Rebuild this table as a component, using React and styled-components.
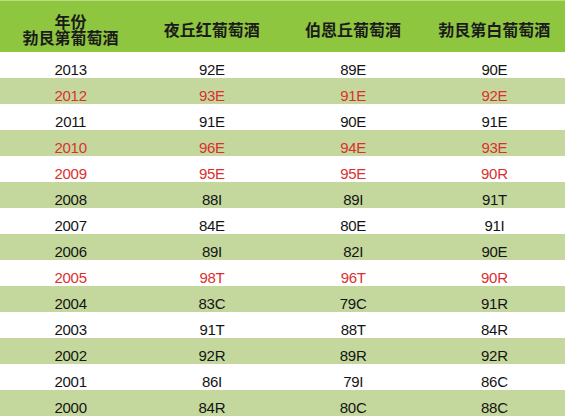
import styled, { createGlobalStyle } from "styled-components";

const GlobalStyle = createGlobalStyle`
  html, body {
    margin: 0;
    padding: 0;
    background: #ffffff;
  }
`;

const columns = ["夜丘红葡萄酒", "伯恩丘葡萄酒", "勃艮第白葡萄酒"];

const rows = [
  { year: "2013", scores: ["92E", "89E", "90E"] },
  { year: "2012", scores: ["93E", "91E", "92E"], hot: true },
  { year: "2011", scores: ["91E", "90E", "91E"] },
  { year: "2010", scores: ["96E", "94E", "93E"], hot: true },
  { year: "2009", scores: ["95E", "95E", "90R"], hot: true },
  { year: "2008", scores: ["88I", "89I", "91T"] },
  { year: "2007", scores: ["84E", "80E", "91I"] },
  { year: "2006", scores: ["89I", "82I", "90E"] },
  { year: "2005", scores: ["98T", "96T", "90R"], hot: true },
  { year: "2004", scores: ["83C", "79C", "91R"] },
  { year: "2003", scores: ["91T", "88T", "84R"] },
  { year: "2002", scores: ["92R", "89R", "92R"] },
  { year: "2001", scores: ["86I", "79I", "86C"] },
  { year: "2000", scores: ["84R", "80C", "88C"] },
];

const Table = styled.div`
  width: 565px;
  height: 417px;
  overflow: hidden;
  display: flex;
  flex-direction: column;
`;

const HeaderRow = styled.div`
  display: grid;
  grid-template-columns: repeat(4, 1fr);
  height: 52px;
  box-sizing: border-box;
  padding-top: 5px;
  background: #8ec640;
  border-top: 1px solid #b9dc82;
`;

const HeaderCell = styled.div`
  display: flex;
  flex-direction: column;
  align-items: center;
  justify-content: center;
  font-family: "Noto Sans CJK SC", "Noto Sans", sans-serif;
  font-weight: 700;
  font-size: 16px;
  line-height: 17px;
  color: #1b1b1b;
`;

const HeaderLine = styled.div`
  height: 16px;
  line-height: 16px;
  overflow: visible;
`;

const Row = styled.div`
  display: grid;
  grid-template-columns: repeat(4, 1fr);
  height: 26px;
  flex-shrink: 0;
  background: ${(p) => (p.$striped ? "#c4d89d" : "#ffffff")};
  color: ${(p) => (p.$hot ? "#dc3030" : "#141414")};
`;

const Cell = styled.div`
  box-sizing: border-box;
  padding-top: 9px;
  text-align: center;
  font-family: "Liberation Sans", Arial, sans-serif;
  font-size: 15px;
  line-height: 17px;
  letter-spacing: -0.3px;
`;

export default function App() {
  return (
    <>
      <GlobalStyle />
      <Table>
        <HeaderRow>
          <HeaderCell>
            <HeaderLine>年份</HeaderLine>
            <HeaderLine>勃艮第葡萄酒</HeaderLine>
          </HeaderCell>
          {columns.map((c) => (
            <HeaderCell key={c}>{c}</HeaderCell>
          ))}
        </HeaderRow>
        {rows.map((r, i) => (
          <Row key={r.year} $striped={i % 2 === 1} $hot={r.hot}>
            <Cell>{r.year}</Cell>
            {r.scores.map((s, j) => (
              <Cell key={j}>{s}</Cell>
            ))}
          </Row>
        ))}
      </Table>
    </>
  );
}
